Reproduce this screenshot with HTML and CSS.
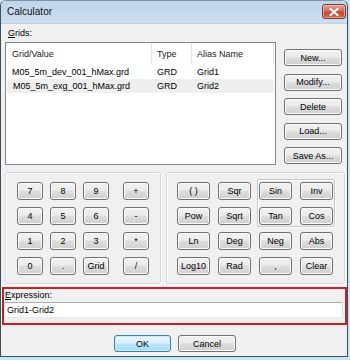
FILE: index.html
```html
<!DOCTYPE html>
<html>
<head>
<meta charset="utf-8">
<link rel="stylesheet" href="styles.css">
</head>
<body>
<div class="window">
  <div class="titlebar">
    <span class="title">Calculator</span>
    <button class="close"><svg width="10" height="8" viewBox="0 0 10 8"><path d="M1.5 1 L8.5 7 M8.5 1 L1.5 7" stroke="#fff" stroke-width="2" stroke-linecap="square"/></svg></button>
  </div>
  <div class="client">
    <div class="label"><u>G</u>rids:</div>
    <div class="grids-row">
      <div class="listview">
        <div class="lv-head">
          <div class="c1">Grid/Value</div><div class="c2">Type</div><div class="c3">Alias Name</div>
        </div>
        <div class="lv-row">
          <div class="c1">M05_5m_dev_001_hMax.grd</div><div class="c2">GRD</div><div class="c3">Grid1</div>
        </div>
        <div class="lv-row alt">
          <div class="c1">M05_5m_exg_001_hMax.grd</div><div class="c2">GRD</div><div class="c3">Grid2</div>
        </div>
      </div>
      <div class="side-buttons">
        <button class="btn">New...</button>
        <button class="btn">Modify...</button>
        <button class="btn">Delete</button>
        <button class="btn">Load...</button>
        <button class="btn">Save As...</button>
      </div>
    </div>
    <div class="calc-row">
      <div class="group keypad">
        <button class="btn">7</button><button class="btn">8</button><button class="btn">9</button><button class="btn op">+</button>
        <button class="btn">4</button><button class="btn">5</button><button class="btn">6</button><button class="btn op">-</button>
        <button class="btn">1</button><button class="btn">2</button><button class="btn">3</button><button class="btn op">*</button>
        <button class="btn">0</button><button class="btn">.</button><button class="btn">Grid</button><button class="btn op">/</button>
      </div>
      <div class="group funcs">
        <button class="btn">( )</button><button class="btn">Sqr</button>
        <div class="trig">
          <button class="btn">Sin</button><button class="btn">Inv</button>
          <button class="btn">Tan</button><button class="btn">Cos</button>
        </div>
        <button class="btn">Pow</button><button class="btn">Sqrt</button>
        <button class="btn">Ln</button><button class="btn">Deg</button><button class="btn">Neg</button><button class="btn">Abs</button>
        <button class="btn">Log10</button><button class="btn">Rad</button><button class="btn">,</button><button class="btn">Clear</button>
      </div>
    </div>
    <div class="expr">
      <div class="label expr-label"><u>E</u>xpression:</div>
      <div class="textbox">Grid1-Grid2</div>
    </div>
    <div class="footer">
      <button class="btn default ok">OK</button>
      <button class="btn cancel">Cancel</button>
    </div>
  </div>
</div>
</body>
</html>
```

FILE: styles.css
```css
html, body {
  margin: 0;
  padding: 0;
}
body {
  width: 350px;
  height: 360px;
  overflow: hidden;
  background: #c6e9ef;
  font-family: "Liberation Sans", Arial, sans-serif;
  font-size: 9px;
  color: #000;
}
.window {
  width: 348px;
  height: 357px;
  box-sizing: border-box;
  border: 1px solid #3b4f63;
  border-top-color: #7f93a8;
  border-radius: 6px 6px 0 0;
  background: #f0f0f0;
  display: flex;
  flex-direction: column;
  overflow: hidden;
}
.titlebar {
  height: 23px;
  flex: none;
  display: flex;
  justify-content: space-between;
  align-items: flex-start;
  background: linear-gradient(#c0d5ec, #cddef0);
  border-bottom: 1px solid #c3d2e2;
  box-sizing: border-box;
}
.title {
  font-size: 10px;
  line-height: 12px;
  margin: 5px 0 0 6px;
  color: #101010;
}
.close {
  width: 24px;
  height: 15px;
  margin: 3px 1px 0 0;
  padding: 0;
  box-sizing: border-box;
  border: 1px solid #7e3a34;
  border-radius: 3px;
  background: linear-gradient(#e5a597, #cf6c5d 48%, #bf4a38 52%, #cc6552);
  box-shadow: inset 0 0 0 1px rgba(255, 220, 210, 0.5);
  display: flex;
  align-items: center;
  justify-content: center;
}
.close svg { display: block; }
.client {
  flex: 1;
  display: flex;
  flex-direction: column;
  padding: 0 1px 0 4px;
}
.label {
  line-height: 12px;
  margin-top: 3px;
  padding-left: 3px;
}
.grids-row {
  display: flex;
  margin-top: 3px;
  height: 123px;
}
.listview {
  width: 271px;
  height: 123px;
  box-sizing: border-box;
  border: 1px solid #828790;
  background: #fff;
}
.lv-head, .lv-row {
  display: flex;
}
.lv-head {
  height: 22px;
  line-height: 22px;
  color: #1a1a1a;
}
.lv-head > div {
  border-right: 1px solid #e3e6ea;
  box-sizing: border-box;
}
.lv-row {
  height: 14px;
  line-height: 14px;
}
.lv-row.alt {
  background: #efefef;
  margin-left: 1px;
  width: 267px;
}
.lv-row.alt .c1 { width: 145px; }
.c1 { width: 146px; padding-left: 6px; box-sizing: border-box; }
.c2 { width: 40px; padding-left: 5px; box-sizing: border-box; }
.c3 { width: 82px; padding-left: 5px; box-sizing: border-box; }
.side-buttons {
  display: flex;
  flex-direction: column;
  gap: 7.5px;
  margin: 7px 0 0 8px;
}
.btn {
  font-family: inherit;
  font-size: 9px;
  color: #000;
  box-sizing: border-box;
  padding: 0;
  margin: 0;
  border: 1px solid #707070;
  border-radius: 3px;
  background: linear-gradient(#f2f2f2, #ebebeb 45%, #dddddd 52%, #cfcfcf);
  box-shadow: inset 0 0 0 1px #fbfbfb;
  line-height: 14px;
  text-align: center;
}
.side-buttons .btn {
  width: 58px;
  height: 17px;
}
.calc-row {
  display: flex;
  gap: 5px;
  margin-top: 7px;
  height: 112px;
}
.group {
  box-sizing: border-box;
  border: 1px solid #d2d8de;
  border-radius: 3px;
  box-shadow: inset 1px 1px 0 #fff, 1px 1px 0 #fff;
  height: 112px;
}
.keypad {
  width: 156px;
  display: grid;
  grid-template-columns: 26px 26px 26px 33px;
  grid-auto-rows: 18px;
  column-gap: 7px;
  row-gap: 7px;
  padding: 9px 0 0 11px;
  align-content: start;
}
.keypad .btn { height: 18px; width: 26px; }
.keypad .op { justify-self: end; }
.funcs {
  width: 179px;
  display: grid;
  grid-template-columns: 33px 33px 33px 33px;
  grid-auto-rows: 18px;
  column-gap: 8px;
  row-gap: 7px;
  padding: 9px 0 0 10px;
  align-content: start;
}
.funcs .btn { height: 18px; width: 33px; }
.trig {
  grid-column: 3 / 5;
  grid-row: 1 / 3;
  display: grid;
  grid-template-columns: 33px 33px;
  grid-auto-rows: 18px;
  column-gap: 8px;
  row-gap: 7px;
  margin: -3px -2px -2px -2px;
  padding: 2px 1px 1px 1px;
  border: 1px solid #c4cad0;
  border-radius: 2px;
  box-shadow: 1px 1px 0 #fff, inset 1px 1px 0 #fff;
}
.expr {
  margin: 3px -1px 0 -3px;
  height: 38px;
  box-sizing: border-box;
  border: 2px solid #c2232b;
  padding: 0 2px 0 0;
}
.expr-label {
  margin-top: 0;
  padding-left: 1px;
}
.textbox {
  margin-top: 1px;
  height: 16px;
  box-sizing: border-box;
  border: 1px solid;
  border-color: #abadb3 #dbdfe6 #e3e9ef #e2e3ea;
  background: #fff;
  line-height: 14px;
  padding-left: 2px;
}
.footer {
  display: flex;
  justify-content: center;
  gap: 7px;
  margin-top: 10px;
  padding-right: 1px;
}
.footer .btn { height: 17px; }
.ok { width: 57px; }
.cancel { width: 58px; }
.btn.default {
  border-color: #3c7fb1;
  background: linear-gradient(#eaf6fd, #d9f0fc 48%, #bee6fd 52%, #a7d9f5);
  box-shadow: inset 0 0 0 1px #c8ecfb;
}
```
